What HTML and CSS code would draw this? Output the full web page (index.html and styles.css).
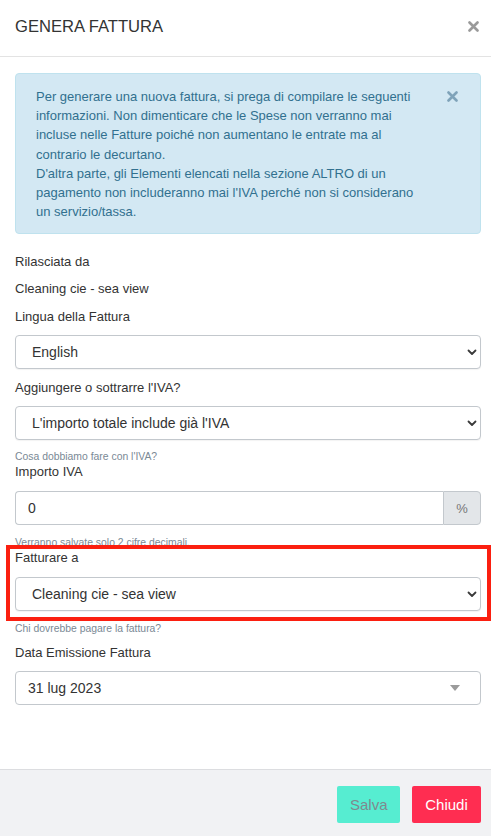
FILE: index.html
```html
<!DOCTYPE html>
<html lang="it">
<head>
<meta charset="utf-8">
<title>Genera Fattura</title>
<link rel="stylesheet" href="styles.css">
</head>
<body>
<div class="modal">
  <div class="modal-header">
    <h4 class="modal-title">GENERA FATTURA</h4>
    <button class="close-btn" type="button" aria-label="Chiudi">
      <svg width="11" height="11" viewBox="0 0 11 11"><path d="M1.5 1.5 L9.5 9.5 M9.5 1.5 L1.5 9.5" stroke="#9a9a9a" stroke-width="2.6" stroke-linecap="round"/></svg>
    </button>
  </div>

  <div class="modal-body">
    <div class="alert">
      <div class="alert-text">Per generare una nuova fattura, si prega di compilare le seguenti informazioni. Non dimenticare che le Spese non verranno mai incluse nelle Fatture poiché non aumentano le entrate ma al contrario le decurtano.<br>D'altra parte, gli Elementi elencati nella sezione ALTRO di un pagamento non includeranno mai l'IVA perché non si considerano un servizio/tassa.</div>
      <button class="alert-close" type="button" aria-label="Chiudi">
        <svg width="11" height="11" viewBox="0 0 11 11"><path d="M1.5 1.5 L9.5 9.5 M9.5 1.5 L1.5 9.5" stroke="#7fa3b9" stroke-width="2.6" stroke-linecap="round"/></svg>
      </button>
    </div>

    <div class="group">
      <label class="field-label">Rilasciata da</label>
      <p class="static-value">Cleaning cie - sea view</p>
    </div>

    <div class="group">
      <label class="field-label">Lingua della Fattura</label>
      <div class="select-wrap">
        <select class="control select"><option>English</option></select>
        <svg class="chevron" width="10" height="7" viewBox="0 0 10 7"><path d="M1.5 1.5 L5 5 L8.5 1.5" fill="none" stroke="#3a3a3a" stroke-width="1.8" stroke-linecap="round" stroke-linejoin="round"/></svg>
      </div>
    </div>

    <div class="group group-tight">
      <label class="field-label">Aggiungere o sottrarre l'IVA?</label>
      <div class="select-wrap">
        <select class="control select"><option>L'importo totale include già l'IVA</option></select>
        <svg class="chevron" width="10" height="7" viewBox="0 0 10 7"><path d="M1.5 1.5 L5 5 L8.5 1.5" fill="none" stroke="#3a3a3a" stroke-width="1.8" stroke-linecap="round" stroke-linejoin="round"/></svg>
      </div>
      <p class="help">Cosa dobbiamo fare con l'IVA?</p>
    </div>

    <div class="group group-tight">
      <label class="field-label label-iva">Importo IVA</label>
      <div class="input-group">
        <input class="control input" type="text" value="0">
        <span class="addon">%</span>
      </div>
      <p class="help help-iva">Verranno salvate solo 2 cifre decimali.</p>
    </div>

    <div class="group group-highlight">
      <label class="field-label label-fatt">Fatturare a</label>
      <div class="select-wrap">
        <select class="control select"><option>Cleaning cie - sea view</option></select>
        <svg class="chevron" width="10" height="7" viewBox="0 0 10 7"><path d="M1.5 1.5 L5 5 L8.5 1.5" fill="none" stroke="#3a3a3a" stroke-width="1.8" stroke-linecap="round" stroke-linejoin="round"/></svg>
      </div>
      <p class="help help-chi">Chi dovrebbe pagare la fattura?</p>
      <div class="highlight-box"></div>
    </div>

    <div class="group">
      <label class="field-label">Data Emissione Fattura</label>
      <div class="date-wrap">
        <div class="control date">31 lug 2023</div>
        <svg class="caret" width="10" height="6" viewBox="0 0 10 6"><path d="M0 0 L10 0 L5 6 Z" fill="#9b9b9b"/></svg>
      </div>
    </div>
  </div>

  <div class="modal-footer">
    <button class="btn btn-save" type="button">Salva</button>
    <button class="btn btn-close" type="button">Chiudi</button>
  </div>
</div>
</body>
</html>
```

FILE: styles.css
```css
* { box-sizing: border-box; }

html, body {
  margin: 0;
  padding: 0;
  height: 100%;
  background: #ffffff;
}

body {
  font-family: "Liberation Sans", Arial, Helvetica, sans-serif;
  color: #333333;
}

.modal {
  display: flex;
  flex-direction: column;
  height: 836px;
}

.modal-header {
  height: 57px;
  padding: 0 10px 2px 15px;
  display: flex;
  align-items: center;
  justify-content: space-between;
  border-bottom: 1px solid #e3e3e3;
  flex: none;
}

.modal-title {
  margin: 0;
  font-size: 16.6px;
  font-weight: normal;
  color: #333333;
  line-height: 20px;
}

.close-btn, .alert-close {
  border: 0;
  background: transparent;
  padding: 0;
  display: flex;
  cursor: pointer;
}

.close-btn { margin-right: 2px; margin-top: -1px; }

.modal-body {
  flex: 1;
  padding: 16px 10px 0 15px;
}

.alert {
  display: flex;
  align-items: flex-start;
  background: #d3e8f3;
  border: 1px solid #bfe2ee;
  border-radius: 4px;
  padding: 13px 22px 12px 20px;
  color: #31708f;
  margin-bottom: 19px;
}

.alert-text {
  flex: 1;
  font-size: 13px;
  line-height: 19.2px;
}

.alert-close {
  width: 11px;
  margin-left: 25px;
  margin-top: 4px;
}

.group { margin-bottom: 10px; }
.group-tight { margin-bottom: 0; }

.field-label {
  display: block;
  font-size: 13px;
  line-height: 18px;
  margin: 0 0 9px;
}

.static-value {
  font-size: 13px;
  line-height: 18px;
  margin: 0 0 0;
}

.label-iva { margin-bottom: 10px; }
.label-fatt { margin-bottom: 10px; }

.control {
  display: block;
  width: 100%;
  height: 34px;
  border: 1px solid #c3c8cd;
  border-radius: 4px;
  background: #ffffff;
  font-family: "Liberation Sans", Arial, Helvetica, sans-serif;
  font-size: 14px;
  color: #333333;
}

.select-wrap, .date-wrap { position: relative; }

.select {
  appearance: none;
  -webkit-appearance: none;
  padding: 0 30px 0 16px;
  box-shadow: 0 1px 1px rgba(0,0,0,0.05);
}

.chevron {
  position: absolute;
  right: 4px;
  top: 14px;
  pointer-events: none;
}

.help {
  margin: 10px 0 0;
  font-size: 10.4px;
  line-height: 13px;
  color: #7a8995;
}

.help-iva { margin-top: 11px; }
.help-chi { margin-top: 11px; }

.input-group {
  display: flex;
}

.input {
  flex: 1;
  padding: 0 12px;
  border-radius: 4px 0 0 4px;
  border-right: 0;
  outline: none;
}

.addon {
  width: 38px;
  height: 34px;
  display: flex;
  align-items: center;
  justify-content: center;
  background: #e3e6e9;
  border: 1px solid #c3c8cd;
  border-radius: 0 4px 4px 0;
  font-size: 13px;
  color: #777777;
}

.group-highlight {
  position: relative;
  margin-bottom: 9px;
}

.highlight-box {
  position: absolute;
  left: -9px;
  top: -4px;
  right: -10px;
  height: 76px;
  border: 4px solid #fb1f10;
  pointer-events: none;
}

.date {
  display: flex;
  align-items: center;
  padding: 0 12px;
}

.caret {
  position: absolute;
  right: 21px;
  top: 14px;
}

.modal-footer {
  flex: none;
  height: 67px;
  border-top: 1px solid #dcdde0;
  background: #f1f2f4;
  display: flex;
  justify-content: flex-end;
  align-items: flex-start;
  gap: 12px;
  padding: 16px 10px 0 15px;
}

.btn {
  height: 37px;
  padding: 0 13px;
  border: 0;
  border-radius: 2px;
  font-family: "Liberation Sans", Arial, Helvetica, sans-serif;
  font-size: 15px;
  cursor: pointer;
}

.btn-save {
  background: #56edd1;
  color: #80888e;
  width: 63px;
}

.btn-close {
  background: #ff2d51;
  color: #ffffff;
  width: 69px;
}
```
